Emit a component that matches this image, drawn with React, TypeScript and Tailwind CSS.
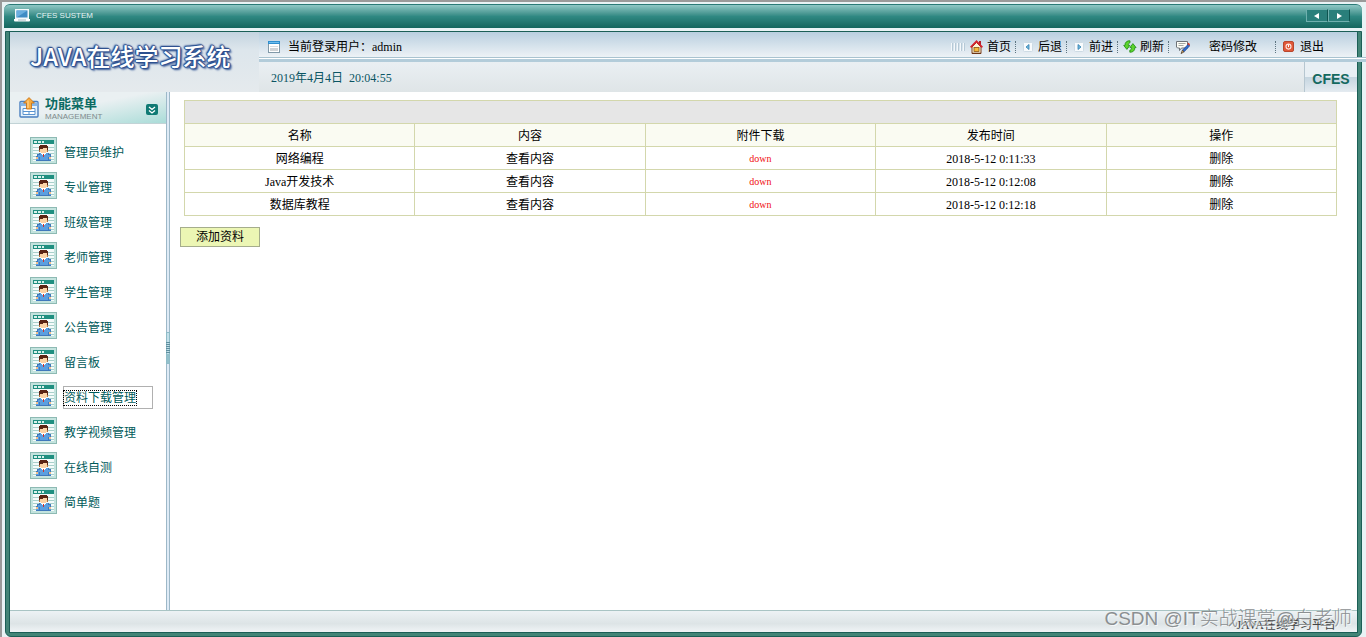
import type { ReactNode } from 'react';

const menu = [
  '管理员维护',
  '专业管理',
  '班级管理',
  '老师管理',
  '学生管理',
  '公告管理',
  '留言板',
  '资料下载管理',
  '教学视频管理',
  '在线自测',
  '简单题',
];

const activeItem = '资料下载管理';

const columns = ['名称', '内容', '附件下载', '发布时间', '操作'];

const materials = [
  { name: '网络编程', time: '2018-5-12 0:11:33' },
  { name: 'Java开发技术', time: '2018-5-12 0:12:08' },
  { name: '数据库教程', time: '2018-5-12 0:12:18' },
];

function MonitorIcon() {
  return (
    <svg width="16" height="13" viewBox="0 0 16 13" aria-hidden="true">
      <rect x="1" y="0" width="14" height="10" fill="#f2f8fa" />
      <rect x="2.5" y="1.5" width="11" height="7" fill="#3f8cc4" />
      <path d="M2.5 1.5h11L2.5 8.5z" fill="#6aaede" />
      <path d="M0 10h16v1.5a1 1 0 0 1-1 1H1a1 1 0 0 1-1-1z" fill="#fff" />
      <path d="M4 11h8" stroke="#9fb8bf" />
    </svg>
  );
}

function WindowIcon() {
  return (
    <svg width="12" height="12" viewBox="0 0 12 12" shapeRendering="crispEdges" aria-hidden="true">
      <rect width="12" height="12" fill="#8199a8" />
      <rect x="1" y="3" width="10" height="8" fill="#fff" />
      <rect width="12" height="3" fill="#2f8fcf" />
      <rect x="1" y="1" width="10" height="1" fill="#6fbdec" />
      <rect x="2" y="5" width="8" height="1" fill="#d9dde0" />
      <rect x="2" y="7" width="8" height="3" fill="#cfd3d6" />
    </svg>
  );
}

function HomeIcon() {
  return (
    <svg width="13" height="14" viewBox="0 0 13 14" aria-hidden="true">
      <rect x="9" y="1" width="2" height="4" fill="#b3202a" />
      <path d="M2 7l4.5-4.5L11 7v6.5H2z" fill="#fdf6d8" stroke="#7a3d1c" />
      <path d="M.6 7.4L6.5 1.4l5.9 6" fill="none" stroke="#d4242e" strokeWidth="1.9" />
      <rect x="4" y="7.5" width="5" height="4" fill="#f6b93a" stroke="#8a5313" strokeWidth=".8" />
      <path d="M2 13.3h9" stroke="#6b3415" strokeWidth="1.2" />
    </svg>
  );
}

function ArrowIcon({ dir }: { dir: 'left' | 'right' }) {
  return (
    <svg width="10" height="10" viewBox="0 0 10 10" aria-hidden="true">
      <rect x=".5" y=".5" width="9" height="9" rx="1" fill="#f8fbfd" stroke="#cddbe4" />
      <path d={dir === 'left' ? 'M6 2.5v5L3 5z' : 'M4 2.5v5L7 5z'} fill="#74b9dc" stroke="#2f7fae" strokeWidth=".8" />
    </svg>
  );
}

function RefreshIcon() {
  return (
    <svg width="14" height="13" viewBox="0 0 14 13" aria-hidden="true">
      <g fill="#5cd42c" stroke="#1d8a12" strokeWidth=".8" strokeLinejoin="round">
        <path d="M7 .8C4.200.4 1.700 2.400 2 5.400H.7l3.200 4 3-4H5.300C5.200 3.900 5.800 3 7 2.800z" />
        <path d="M6.800 12.200c2.800.4 5.300-1.600 5-4.600h1.300l-3.200-4-3 4h1.600c.1 1.500-.5 2.400-1.700 2.600z" />
      </g>
    </svg>
  );
}

function EditIcon() {
  return (
    <svg width="14" height="14" viewBox="0 0 14 14" aria-hidden="true">
      <path d="M.5 1.500h11v6.500h-6L3.500 10.500V8h-2l-1-1z" fill="#fdfdf6" stroke="#6d7378" />
      <path d="M2.500 3.500h7M2.500 5.500h5" stroke="#a3a8a3" />
      <path d="M12.300 4.200l1.400 1.600-5.600 6-1.700-1.500z" fill="#2f6fd0" stroke="#173a86" strokeWidth=".7" />
      <path d="M11.300 3.800l1.300-1 1.400 1.500-.9 1.500z" fill="#d83a2a" />
      <path d="M6.400 10.300l1.700 1.500-3 1.800z" fill="#f0bc72" stroke="#3a2a18" strokeWidth=".7" />
    </svg>
  );
}

function ExitIcon() {
  return (
    <svg width="11" height="11" viewBox="0 0 11 11" aria-hidden="true">
      <rect x=".5" y=".5" width="10" height="10" rx="1.500" fill="#e0593a" stroke="#b8472e" />
      <circle cx="5.500" cy="5.600" r="2.500" fill="none" stroke="#ffe8e0" strokeWidth="1.100" />
      <path d="M5.500 3.600v2.500" stroke="#fff" />
    </svg>
  );
}

function UploadIcon() {
  return (
    <svg width="20" height="21" viewBox="0 0 20 21" aria-hidden="true">
      <rect x="1" y="4.500" width="18" height="15.500" rx="1" fill="#e6f2fb" stroke="#4a7fc0" strokeWidth="1.400" />
      <path d="M1.500 5.500h17V9h-17z" fill="#86b6e8" />
      <path d="M4 11.500h12v6H4zM4 14.500h12M10 14v3.500" fill="#fff" stroke="#5a93d0" />
      <path d="M10 .6L15.400 6h-2.900v6h-5V6H4.600z" fill="#f7ab3c" stroke="#c9741a" strokeWidth=".9" />
      <path d="M9 3.500v7.500" stroke="#fcd596" strokeWidth="1.200" />
    </svg>
  );
}

function UserIcon() {
  return (
    <svg width="27" height="27" viewBox="0 0 27 27" shapeRendering="crispEdges" className="shrink-0" aria-hidden="true">
      <rect width="27" height="27" fill="#8dbab3" />
      <rect x="1" y="1" width="25" height="25" fill="#c3e3de" />
      <rect x="3" y="7" width="21" height="17" fill="#f4fbfa" />
      <rect x="3" y="3" width="21" height="4" fill="#1f8f80" />
      <path d="M4 4h3v2H4zM8 4h3v2H8zM12 4h2v2h-2z" fill="#d8f2ec" />
      <path d="M3 10.500h21M3 13.500h21M3 16.500h21M3 19.500h21M3 22.500h21" stroke="#a9d0cb" />
      {/* body, arms, tie */}
      <path d="M9 16h9v1h2v2h1v4H6v-4h1v-2h2z" fill="#5b9fe0" />
      <path d="M6 19h1v-2h2v-1M21 19h-1v-2h-2v-1M9 20v3M18 20v3" fill="none" stroke="#3f78bc" />
      <path d="M11 16h5v1h-1v1h-3v-1h-1z" fill="#fff" />
      <path d="M13 17h1v3h-1z" fill="#d0342c" />
      <path d="M6 20h2v2H6zM19 20h2v2h-2z" fill="#f5c08a" />
      {/* head */}
      <path d="M10 10h7v5h-1v1h-5v-1h-1z" fill="#fbd3a6" />
      <path d="M10 8h7v1h1v4h-1v-2h-4v1h-3v1H9V9h1z" fill="#5a2413" />
      <path d="M9 13h1v2H9zM17 13h1v2h-1z" fill="#b0713c" />
      <path d="M6 23h15v1H6z" fill="#3f78bc" />
    </svg>
  );
}

function Divider() {
  return <span className="mr-0.5 h-3 border-l border-dotted border-[#5d7480]" />;
}

function Tool({ icon, label }: { icon: ReactNode; label: string }) {
  return (
    <>
      <a href="#" className="mr-1 flex items-center">
        <span className="flex w-5 justify-center">{icon}</span>
        {label}
      </a>
      <Divider />
    </>
  );
}

function TitleBar() {
  return (
    <div className="ml-0.5 mr-1 flex h-6 items-center justify-between rounded-t-md border-t border-[#2a7a76] bg-linear-to-b from-[#8fc8c6] from-0% via-[#2f8882] via-50% to-[#14665e] pb-0.5 pl-2.5 pr-3">
      <div className="flex items-center gap-1.5">
        <MonitorIcon />
        <span className="font-['Liberation_Sans'] text-[8px] text-[#e4f3f3]">CFES SUSTEM</span>
      </div>
      <div className="flex">
        <button type="button" aria-label="上一页" className="flex h-[13px] w-[22px] items-center justify-center border border-[#6fb0ae] border-r-[#0f5450] bg-[#2a7f7b]">
          <svg width="6" height="6" viewBox="0 0 6 6"><path d="M5 0v6L0 3z" fill="#fff" /></svg>
        </button>
        <button type="button" aria-label="下一页" className="flex h-[13px] w-[22px] items-center justify-center border border-[#6fb0ae] border-r-[#0f5450] bg-[#2a7f7b]">
          <svg width="6" height="6" viewBox="0 0 6 6"><path d="M1 0v6l5-3z" fill="#fff" /></svg>
        </button>
      </div>
    </div>
  );
}

function Header() {
  return (
    <header className="flex h-[60px] bg-linear-to-b from-[#bfd1de] via-[#e3eaef] via-60% to-[#e3e8ea]">
      <h1 className="w-[249px] shrink-0 bg-linear-to-b from-[#c4d4e0] via-[#dde6ec] via-30% to-[#e5eaed] pl-5 pt-2 font-['Liberation_Sans_Narrow','Noto_Sans_CJK_SC',sans-serif] text-2xl font-medium leading-8 whitespace-nowrap text-white [text-shadow:1px_0_1px_#2c4f8f,-1px_0_1px_#2c4f8f,0_1px_1px_#2c4f8f,0_-1px_1px_#2c4f8f,1px_1px_2px_#2c4f8f,-1px_-1px_2px_#2c4f8f,2px_2px_2px_#5874a8]">
        JAVA在线学习系统
      </h1>
      <div className="flex flex-1 flex-col">
        <div className="flex h-[25px] items-center justify-between bg-linear-to-b from-[#b9cfdf] to-[#edf2f6] pl-[9px] pr-[33px] pt-1">
          <div className="flex items-center gap-2">
            <WindowIcon />
            <span>当前登录用户：admin</span>
          </div>
          <nav className="flex items-center">
            <svg width="16" height="8" viewBox="0 0 16 8" shapeRendering="crispEdges" aria-hidden="true">
              <path d="M.5 0v8M3.500 0v8M6.500 0v8M9.500 0v8M12.500 0v8" stroke="#f4f8fb" />
              <path d="M1.500 0v8M4.500 0v8M7.500 0v8M10.500 0v8M13.500 0v8" stroke="#b6c9d6" />
            </svg>
            <Tool icon={<HomeIcon />} label="首页" />
            <Tool icon={<ArrowIcon dir="left" />} label="后退" />
            <Tool icon={<ArrowIcon dir="right" />} label="前进" />
            <Tool icon={<RefreshIcon />} label="刷新" />
            <a href="#" className="mr-[18px] flex items-center gap-[14px]">
              <span className="flex w-6 justify-center"><EditIcon /></span>
              密码修改
            </a>
            <Divider />
            <a href="#" className="flex items-center">
              <span className="flex w-[22px] justify-center"><ExitIcon /></span>
              退出
            </a>
          </nav>
        </div>
        <div className="-mr-[9px] h-[5px] border-b-[3px] border-t border-b-[#b3ccda] border-t-[#a9c3d0] bg-white" />
        <div className="flex flex-1 items-stretch justify-between bg-linear-to-b from-[#eaeff3] to-[#dfe5e7] pl-3">
          <span className="self-center pt-0.5 text-[#0b5563] whitespace-pre">2019年4月4日  20:04:55</span>
          <span className="flex w-[53px] items-center justify-center border-l border-[#b6c6d0] bg-linear-to-b from-[#e8eff4] from-50% via-[#c5d5e0] via-50% to-[#e4ebf0] pt-1 font-['Liberation_Sans'] text-sm font-bold text-[#14695f]">
            CFES
          </span>
        </div>
      </div>
    </header>
  );
}

function Sidebar() {
  return (
    <aside className="w-[156px] shrink-0">
      <div className="flex h-8 items-center border-b border-[#c2d3d6] bg-linear-to-br from-[#eaf0f2] from-45% to-[#a9dcd8] pl-[9px] pr-2">
        <UploadIcon />
        <div className="ml-1.5 flex-1">
          <h2 className="font-['Noto_Sans_CJK_SC',sans-serif] text-[13px] font-bold leading-4 text-[#0b6b63]">功能菜单</h2>
          <p className="mt-0.5 font-['Liberation_Sans'] text-[8px] leading-2 text-[#7f8a8c]">MANAGEMENT</p>
        </div>
        <button type="button" aria-label="收起菜单" className="mt-1 grid h-[11px] w-3 place-items-center rounded-xs bg-[#0f7a74]">
          <svg width="8" height="8" viewBox="0 0 8 8" fill="none" stroke="#fff" strokeWidth="1.300">
            <path d="M1 1l3 2.500L7 1M1 4.500L4 7l3-2.500" />
          </svg>
        </button>
      </div>
      <ul className="flex flex-col gap-2 pl-5 pt-[13px]">
        {menu.map((item) => (
          <li key={item} className="flex items-end gap-1.5">
            <UserIcon />
            <a
              href="#"
              className={`flex h-[23px] w-[90px] items-center border text-[#005a5a] ${item === activeItem ? 'border-[#b0b0b0]' : 'border-transparent'}`}
            >
              <span className={item === activeItem ? 'leading-3.5 outline-1 outline-dotted outline-black' : ''}>{item}</span>
            </a>
          </li>
        ))}
      </ul>
    </aside>
  );
}

function Splitter() {
  return (
    <div className="flex w-1 shrink-0 items-center border-x border-[#9db8c8] bg-[#dfebf6] pb-1.5">
      <svg width="4" height="32" viewBox="0 0 4 32" shapeRendering="crispEdges" className="-mx-px shrink-0" aria-hidden="true">
        <rect width="4" height="32" fill="#8fbcc8" />
        <rect x="1" y="1" width="2" height="30" fill="#c4e0ea" />
        <path d="M0 10.500h4M0 12.500h4M0 14.500h4M0 16.500h4M0 18.500h4M0 20.500h4" stroke="#5f8f9f" />
        <rect x="1" y="22" width="2" height="9" fill="#93c0cb" />
      </svg>
    </div>
  );
}

function Materials() {
  return (
    <main className="flex-1 pb-4 pl-2.5 pr-5 pt-2">
      <div className="pl-1">
        <table className="w-full table-fixed border-collapse text-center">
          <thead>
            <tr className="h-[23px] bg-[#e6e6e6]">
              <td colSpan={5} className="border border-[#d3d7ac] p-0" />
            </tr>
            <tr className="h-[23px] bg-[#fafbf2]">
              {columns.map((c) => (
                <th key={c} className="border border-[#d3d7ac] p-0 pt-0.5 font-normal">{c}</th>
              ))}
            </tr>
          </thead>
          <tbody>
            {materials.map((m) => (
              <tr key={m.name} className="h-[23px]">
                <td className="border border-[#d3d7ac] p-0 pt-0.5">{m.name}</td>
                <td className="border border-[#d3d7ac] p-0 pt-0.5"><a href="#">查看内容</a></td>
                <td className="border border-[#d3d7ac] p-0 pt-0.5 text-[10px] text-[#f01010]"><a href="#">down</a></td>
                <td className="border border-[#d3d7ac] p-0 pt-0.5">{m.time}</td>
                <td className="border border-[#d3d7ac] p-0 pt-0.5"><a href="#">删除</a></td>
              </tr>
            ))}
          </tbody>
        </table>
      </div>
      <button type="button" className="mt-[11px] flex h-5 w-20 items-center justify-center border border-[#a5ad8c] bg-[#ecf6b4]">
        添加资料
      </button>
    </main>
  );
}

export default function App() {
  return (
    <div className="relative flex min-h-screen flex-col border-l-2 border-t-2 border-[#9a9a9a] bg-[#e9f3f5] pt-0.5 font-['Liberation_Serif','Noto_Sans_CJK_SC',serif] text-xs leading-4 text-black">
      <TitleBar />
      <div className="ml-[3px] mr-1 mt-[3px] flex flex-1 flex-col rounded-b-md border border-[#1b5f56] bg-[#438577] px-[3px] pb-[3px]">
        <div className="flex flex-1 flex-col border-x border-b border-[#1b5f56] bg-white">
          <Header />
          <div className="flex flex-1">
            <Sidebar />
            <Splitter />
            <Materials />
          </div>
          <footer className="flex h-[22px] items-end justify-end border-t border-[#a9c4c4] bg-linear-to-b from-[#edf2f5] via-[#dde4e6] via-60% to-[#f0f4f6] pr-[21px] text-[#444]">
            <span className="leading-3.5">JAVA在线学习平台</span>
          </footer>
        </div>
      </div>
      <div className="pointer-events-none absolute bottom-1.5 right-3.5 font-['Liberation_Sans','Noto_Sans_CJK_SC',sans-serif] text-[19px] font-light leading-6 whitespace-nowrap text-[#8b8f91] [text-shadow:1px_1px_0_#ffffffb0]">
        CSDN @IT实战课堂@白老师
      </div>
    </div>
  );
}
